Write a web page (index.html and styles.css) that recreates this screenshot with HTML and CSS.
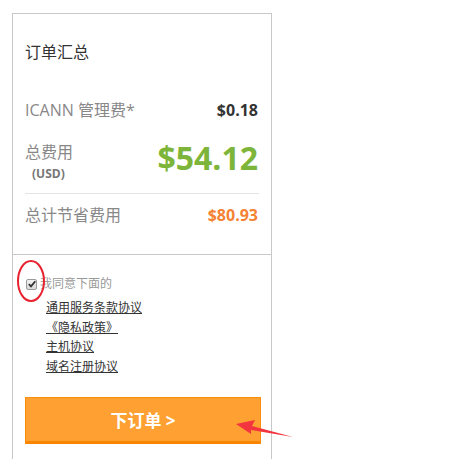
FILE: index.html
```html
<!DOCTYPE html>
<html>
	<head>
		<meta charset="utf-8">
		<title>订单汇总</title>
		<link rel="stylesheet" href="styles.css">
	</head>
	<body>
		<div class=summary>
			<div class=totals>
				<h3 class=title>订单汇总</h3>
				<div class="row fee">
					<span class=label>ICANN 管理费*</span>
					<span class=amount>$0.18</span>
				</div>
				<div class="row total">
					<div class=label>
						总费用
						<div class=currency>(USD)</div>
					</div>
					<span class=big>$54.12</span>
				</div>
				<div class="row saving">
					<span class=label>总计节省费用</span>
					<span class="amount orange">$80.93</span>
				</div>
			</div>
			<div class=agree>
				<label class=check><span class=box><svg width="8" height="8" viewBox="0 0 8 8"><path d="M0.8 4.2 L3 6.4 L7.3 1.2" fill="none" stroke="#333" stroke-width="1.8"/></svg></span>我同意下面的</label>
				<ul class=terms>
					<li><a href="#">通用服务条款协议</a></li>
					<li><a href="#">《隐私政策》</a></li>
					<li><a href="#">主机协议</a></li>
					<li><a href="#">域名注册协议</a></li>
				</ul>
				<button class=order>下订单 &gt;</button>
			</div>
		</div>
		<svg class=marks width="472" height="459" viewBox="0 0 472 459">
			<ellipse cx="31" cy="281" rx="13" ry="20" fill="none" stroke="#e8232f" stroke-width="2"/>
			<polygon points="236,424 255,420 252,426 293,437 251,430 251,434" fill="#f2353f"/>
		</svg>
	</body>
</html>
```

FILE: styles.css
```css
body {
	margin: 0;
	font-family: "Open Sans", "Noto Sans CJK SC", sans-serif;
	background-color: #fff;
	color: #333;
}

.summary {
	width: 258px;
	margin: 13px 0 0 12px;
	border: 1px solid #c8c8c8;
	border-bottom: none;
	height: 446px;
}

.totals {
	padding: 28px 12px 29px 12px;
	border-bottom: 1px solid #c8c8c8;
}

.title {
	margin: 0;
	font-size: 16px;
	font-weight: normal;
	line-height: 20px;
	color: #333;
}

.row {
	display: flex;
	justify-content: space-between;
	align-items: center;
	font-size: 16px;
	line-height: 20px;
}

.label {
	color: #888;
}

.amount {
	font-weight: bold;
	color: #333;
	margin-right: 1px;
}

.orange {
	color: #f58232;
}

.fee {
	margin-top: 38px;
}

.total {
	margin-top: 22px;
	padding-bottom: 9px;
	border-bottom: 1px solid #e3e3e3;
}

.currency {
	font-size: 12px;
	font-weight: bold;
	color: #777;
	margin: 2px 0 0 7px;
}

.big {
	font-size: 32px;
	font-weight: bold;
	color: #7db53b;
	line-height: 36px;
	margin: -10px 1px 0 0;
}

.saving {
	margin-top: 11px;
}

.agree {
	padding: 20px 12px 0 12px;
	font-size: 12px;
}

.check {
	display: flex;
	align-items: center;
	line-height: 18px;
	color: #999;
}

.box {
	display: inline-flex;
	align-items: center;
	justify-content: center;
	width: 9px;
	height: 9px;
	margin: 0 3px 0 1px;
	border: 1px solid #9a9a9a;
	border-radius: 2px;
	background: linear-gradient(#f2f2f2, #d9d9d9);
}

.terms {
	list-style: none;
	margin: 5px 0 0 21px;
	padding: 0;
	line-height: 19.5px;
}

.terms a {
	color: #333;
	text-decoration: underline;
}

.order {
	display: block;
	width: 236px;
	height: 47px;
	margin-top: 21px;
	background-color: #ffa033;
	border: 1px solid #f98d10;
	border-bottom: 3px solid #fb8500;
	color: #fff;
	font-family: "Open Sans", "Noto Sans CJK SC", sans-serif;
	font-size: 17px;
	font-weight: bold;
	cursor: pointer;
	padding: 0;
}

.marks {
	position: absolute;
	top: 0;
	left: 0;
	pointer-events: none;
}
```
